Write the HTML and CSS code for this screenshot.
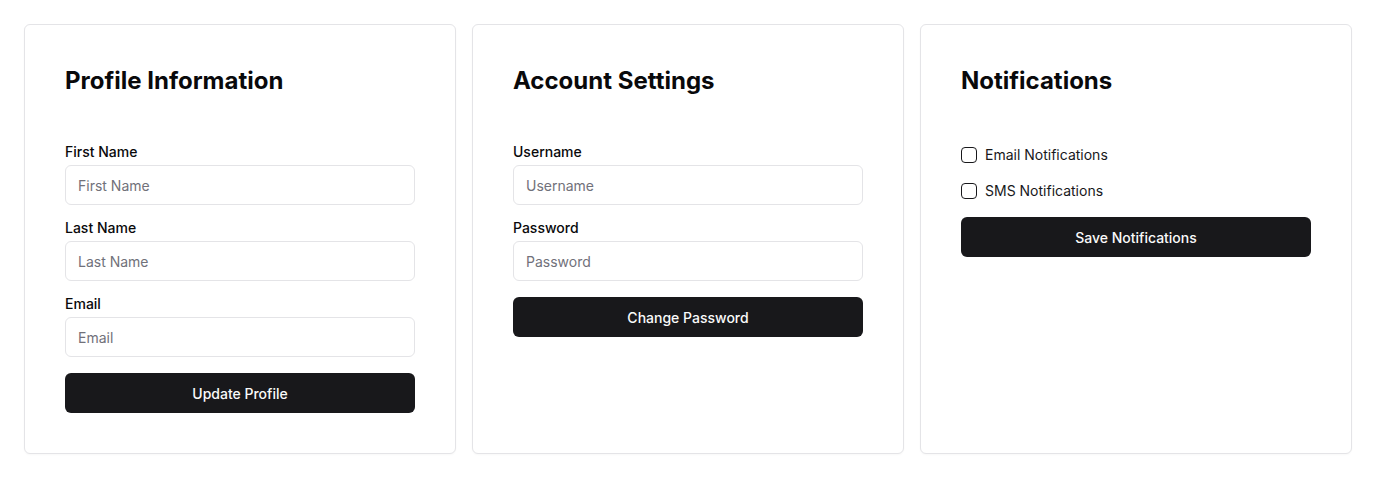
FILE: index.html
```html
<!DOCTYPE html>
<html lang="en">
<head>
<meta charset="utf-8">
<title>Settings</title>
<link rel="stylesheet" href="styles.css">
</head>
<body>
<main class="grid">
  <section class="card">
    <h2 class="card-title">Profile Information</h2>
    <form class="form">
      <div class="field">
        <label class="label" for="fn">First Name</label>
        <input class="input" id="fn" type="text" placeholder="First Name">
      </div>
      <div class="field">
        <label class="label" for="ln">Last Name</label>
        <input class="input" id="ln" type="text" placeholder="Last Name">
      </div>
      <div class="field">
        <label class="label" for="em">Email</label>
        <input class="input" id="em" type="email" placeholder="Email">
      </div>
      <button class="btn" type="button">Update Profile</button>
    </form>
  </section>
  <section class="card">
    <h2 class="card-title">Account Settings</h2>
    <form class="form">
      <div class="field">
        <label class="label" for="un">Username</label>
        <input class="input" id="un" type="text" placeholder="Username">
      </div>
      <div class="field">
        <label class="label" for="pw">Password</label>
        <input class="input" id="pw" type="password" placeholder="Password">
      </div>
      <button class="btn" type="button">Change Password</button>
    </form>
  </section>
  <section class="card">
    <h2 class="card-title">Notifications</h2>
    <form class="checks">
      <label class="check"><input class="checkbox" type="checkbox"><span>Email Notifications</span></label>
      <label class="check"><input class="checkbox" type="checkbox"><span>SMS Notifications</span></label>
      <button class="btn btn-notify" type="button">Save Notifications</button>
    </form>
  </section>
</main>
</body>
</html>
```
FILE: styles.css
```css
* { box-sizing: border-box; }
html, body { margin: 0; background: #ffffff; }
body {
  font-family: Inter, "Noto Sans", "Liberation Sans", sans-serif;
  color: #09090b;
  padding: 24px;
}
.grid {
  display: grid;
  grid-template-columns: repeat(3, 1fr);
  gap: 16px;
}
.card {
  border: 1px solid #e4e4e7;
  border-radius: 6px;
  padding: 40px;
  min-height: 430px;
  background: #fff;
  box-shadow: 0 1px 2px rgba(0,0,0,0.03);
}
.card-title {
  margin: 0 0 45px;
  font-size: 24px;
  line-height: 32px;
  font-weight: 700;
  letter-spacing: 0;
}
.form {
  display: flex;
  flex-direction: column;
  gap: 13px;
}
.field {
  display: flex;
  flex-direction: column;
  gap: 3px;
}
.label {
  font-size: 14px;
  line-height: 20px;
  font-weight: 500;
}
.input {
  height: 40px;
  width: 100%;
  border: 1px solid #e4e4e7;
  border-radius: 6px;
  padding: 0 12px;
  font: inherit;
  font-size: 14px;
  color: #09090b;
  background: #fff;
  outline: none;
}
.input::placeholder { color: #71717a; }
.btn {
  height: 40px;
  width: 100%;
  border: none;
  border-radius: 6px;
  background: #18181b;
  color: #fafafa;
  font-family: inherit;
  font-size: 14px;
  font-weight: 500;
  margin-top: 3px;
  cursor: pointer;
}
.checks {
  display: flex;
  flex-direction: column;
  gap: 15px;
  padding-top: 3px;
}
.check {
  display: flex;
  align-items: center;
  gap: 8px;
  height: 20px;
  font-size: 14px;
  line-height: 20px;
  color: #18181b;
}
.check + .check { margin-top: 1px; }
.checkbox {
  appearance: none;
  -webkit-appearance: none;
  margin: 0;
  width: 16px;
  height: 16px;
  border: 1px solid #18181b;
  border-radius: 4px;
  background: #fff;
  flex: none;
}
.btn-notify { margin-top: 1px; }
```
